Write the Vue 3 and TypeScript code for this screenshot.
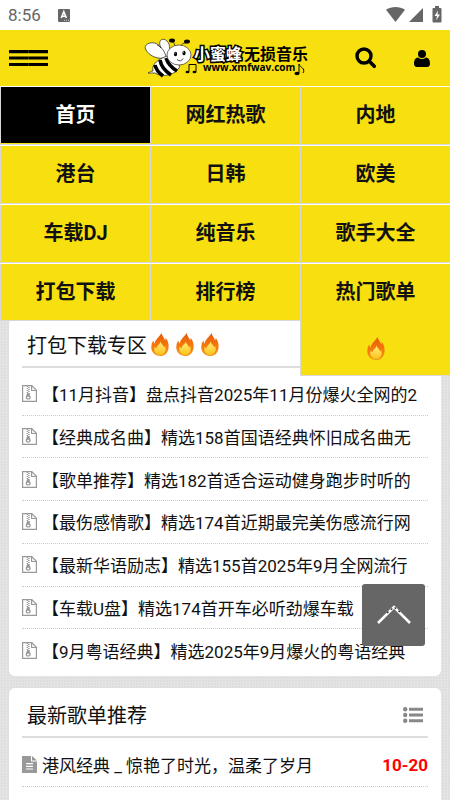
<script setup lang="ts">
interface NavItem {
  label: string
  active?: boolean
  hot?: boolean
}

const nav: NavItem[] = [
  { label: '首页', active: true },
  { label: '网红热歌' },
  { label: '内地' },
  { label: '港台' },
  { label: '日韩' },
  { label: '欧美' },
  { label: '车载DJ' },
  { label: '纯音乐' },
  { label: '歌手大全' },
  { label: '打包下载' },
  { label: '排行榜' },
  { label: '热门歌单', hot: true },
]

const packs: string[] = [
  '【11月抖音】盘点抖音2025年11月份爆火全网的2',
  '【经典成名曲】精选158首国语经典怀旧成名曲无',
  '【歌单推荐】精选182首适合运动健身跑步时听的',
  '【最伤感情歌】精选174首近期最完美伤感流行网',
  '【最新华语励志】精选155首2025年9月全网流行',
  '【车载U盘】精选174首开车必听劲爆车载',
  '【9月粤语经典】精选2025年9月爆火的粤语经典',
]

const songs: { title: string; date: string }[] = [
  { title: '港风经典 _ 惊艳了时光，温柔了岁月', date: '10-20' },
  { title: '别封伤的 _ 总有一首歌能打动你', date: '10-20' },
]

function toTop(): void {
  window.scrollTo({ top: 0, behavior: 'smooth' })
}
</script>

<template>
  <div class="page">
    <svg class="defs" aria-hidden="true">
      <defs>
        <linearGradient id="flameOuter" x1="0" y1="0" x2="0" y2="1">
          <stop offset="0" stop-color="#e8590c" />
          <stop offset="0.6" stop-color="#f57c0a" />
          <stop offset="1" stop-color="#f39a1c" />
        </linearGradient>
        <linearGradient id="flameInner" x1="0" y1="0" x2="0" y2="1">
          <stop offset="0" stop-color="#fff07a" />
          <stop offset="1" stop-color="#fcc21b" />
        </linearGradient>
        <symbol id="flame" viewBox="0 0 18 23">
          <path fill="url(#flameOuter)" d="M10.600 0c.4 3.200 2.600 4.600 3.600 7.400.5-.8.5-1.700.3-2.600 2.300 2.500 3.300 6 3.100 9.400C17.300 19.500 13.900 23 9 23S.5 19.600.3 14.600C.2 11.800 1 9.400 2.400 7.400c.1 1.500.5 2.600 1.200 3.400C4 6.500 7.800 4.300 10.600 0z" />
          <path fill="url(#flameInner)" d="M9.800 8.400c0 2.700 3.300 3.900 3.400 6.300.5-.5.8-1.200.9-2 1.700 4.600-.5 9.200-5 9.200s-7-4.200-5.300-8.400c.4 1 1 1.500 1.700 1.800.1-2.800 3.400-3.900 4.300-6.900z" />
        </symbol>
        <symbol id="zip" viewBox="0 0 15 17">
          <path fill="none" stroke="#999" stroke-width="1.200" d="M.6.6h9.200l4.600 4.700v11.100H.6zM9.600.8v4.700h4.600" />
          <path fill="none" stroke="#999" stroke-width="1.500" stroke-dasharray="1 1" d="M5.400 1v7M6.900 2v7" />
          <path fill="#999" fill-rule="evenodd" d="M5.200 8h1.900l1.600 4c.5 1.500-.8 2.600-2.500 2.600s-3-1.100-2.500-2.600zm1 3.700c-.8 0-1.300.5-1.300.9 0 .5.5.9 1.300.9s1.300-.4 1.300-.9c0-.4-.5-.9-1.300-.9z" />
        </symbol>
        <symbol id="doc" viewBox="0 0 15 17">
          <path fill="#999" fill-rule="evenodd" d="M0 0h9v5.500h6V17H0zM4 7v1.200h7V7zm0 2.700v1.200h7V9.700zm0 2.700v1.200h7v-1.200z" />
          <path fill="#999" d="M10 0l5 4.600h-5z" />
        </symbol>
      </defs>
    </svg>

    <div class="status">
      <time class="clock">8:56</time>
      <svg class="ime" viewBox="0 0 12 13"><rect width="12" height="13" rx="1" fill="#666" /><path fill="none" stroke="#fff" stroke-width="1.600" d="M3.300 9l2.500-6.300L8.400 9M4 7.200h3.700" /><path stroke="#ccc" stroke-dasharray="1 1" d="M6 11.300h5" /></svg>
      <svg class="signals" viewBox="0 0 56 18">
        <path fill="#666" d="M0 3.800C5.500.1 13.500.1 19 3.800L9.500 16z" />
        <path fill="#666" d="M23 16L37 2v14z" />
        <path fill="#666" d="M49 0h4v2h1.500q1 0 1 1v12.500q0 1-1 1h-7q-1 0-1-1V3q0-1 1-1H49z" />
        <path fill="#fff" d="M52 4.500L48.500 10H51l-.8 4.300L54 8.500h-2.500z" />
      </svg>
    </div>

    <header class="header">
      <button class="icon-btn menu" aria-label="菜单">
        <svg viewBox="0 0 39 17" width="39" height="17"><path stroke="#000" stroke-width="3.200" d="M0 1.600h39M0 8h39M0 14.500h39" /><path stroke="#f7df10" stroke-opacity=".4" stroke-width=".5" d="M19.500 0v17" /></svg>
      </button>
      <a class="logo" href="#" aria-label="小蜜蜂无损音乐">
        <svg viewBox="0 0 168 42" width="168" height="42">
          <g stroke="#333" stroke-width=".8">
            <path fill="#fff" d="M24 20C15 24 5 18 2.500 12S13 2 18 11c-4-8 2-11 6-7s3 12 1 15z" />
            <path fill="none" d="M14 8c5 2 8 7 9 12" />
            <path fill="#fff" d="M24 19c-8 3-16 8-14 15-2 0-3 1-5 2h7c7 5 22 2 25-7z" />
          </g>
          <path fill="none" stroke="#000" stroke-width="3.600" d="M17 23c1 6 5 11 11 15M12 28c1 5 4 8 8 11M23 21c2 6 6 10 11 13" />
          <path fill="none" stroke="#222" stroke-width=".8" d="M32 11c0-4-1-6-4-7M37 11c1-4 3-5 6-5" />
          <ellipse cx="29" cy="3.500" rx="3" ry="2" /><ellipse cx="44" cy="4.500" rx="3" ry="2" />
          <ellipse cx="36" cy="18" rx="12" ry="10" fill="#fff" stroke="#333" stroke-width=".7" />
          <ellipse cx="32.500" cy="17" rx="1.600" ry="2.300" /><ellipse cx="41" cy="16" rx="1.600" ry="2.300" />
          <circle cx="32" cy="16" r=".6" fill="#fff" /><circle cx="40.500" cy="15" r=".6" fill="#fff" />
          <path fill="none" stroke="#222" stroke-width=".8" d="M34 22.500q4 3 6-1" />
          <text class="brand outlined" x="51" y="23">小蜜蜂</text>
          <text class="brand" x="101" y="23">无损音乐</text>
          <text class="domain" x="60" y="34">www.xmfwav.com</text>
          <g fill="none" stroke="#000" stroke-width="1"><path d="M46 34.500v-7h7v7" /><path d="M156 36v-9c1 4 7 4 4 9" /></g>
          <ellipse cx="44.500" cy="35" rx="2" ry="1.300" /><ellipse cx="51.500" cy="35" rx="2" ry="1.300" /><ellipse cx="154" cy="36.500" rx="2.500" ry="1.700" />
        </svg>
      </a>
      <button class="icon-btn search" aria-label="搜索">
        <svg viewBox="0 0 22 22" width="22" height="22"><circle cx="9" cy="9" r="7" fill="none" stroke="#000" stroke-width="3.400" /><path stroke="#000" stroke-width="3.600" stroke-linecap="round" d="M14.300 14.300l5 5" /></svg>
      </button>
      <button class="icon-btn user" aria-label="用户">
        <svg viewBox="0 0 16 17" width="16" height="17"><circle cx="8" cy="4" r="4" /><path d="M4 7.500q4 3 8 0c3 .3 4 3.200 4 6.300 0 2-1 3.200-3 3.200H3c-2 0-3-1.200-3-3.200 0-3.100 1-6 4-6.300z" /></svg>
      </button>
      <nav class="nav">
        <a v-for="item in nav" :key="item.label" href="#" class="cell" :class="{ active: item.active }">
          <span>{{ item.label }}</span>
          <svg v-if="item.hot" class="flame"><use href="#flame" /></svg>
        </a>
      </nav>
    </header>

    <main class="content">
      <section class="card">
        <h2 class="title">
          <span>打包下载专区</span>
          <span class="flames">
            <svg v-for="n in 3" :key="n" class="flame"><use href="#flame" /></svg>
          </span>
        </h2>
        <ul class="list packs">
          <li v-for="text in packs" :key="text">
            <svg class="file"><use href="#zip" /></svg>
            <a href="#">{{ text }}</a>
          </li>
        </ul>
      </section>

      <section class="card">
        <h2 class="title">
          <span>最新歌单推荐</span>
          <a class="more" href="#" aria-label="更多">
            <svg viewBox="0 0 20 16" width="20" height="16"><g fill="#888"><circle cx="2.200" cy="2.200" r="2.200" /><circle cx="2.200" cy="8" r="2.200" /><circle cx="2.200" cy="13.800" r="2.200" /><path d="M6 .8h14v3H6zM6 6.500h14v3H6zM6 12.200h14v3H6z" /></g></svg>
          </a>
        </h2>
        <ul class="list songs">
          <li v-for="song in songs" :key="song.title">
            <svg class="file"><use href="#doc" /></svg>
            <a href="#">{{ song.title }}</a>
            <time class="date">{{ song.date }}</time>
          </li>
        </ul>
      </section>
    </main>

    <button class="to-top" aria-label="返回顶部" @click="toTop">
      <svg viewBox="0 0 34 20" width="34" height="20"><path fill="none" stroke="#fff" stroke-width="2.600" d="M1 18L17 2l16 16" /><path fill="none" stroke="#333" stroke-width="1.400" stroke-dasharray="2 3" d="M10 8l7-6 7 6" /></svg>
    </button>
  </div>
</template>

<style>
body {
  margin: 0;
}
</style>

<style scoped>
.page {
  height: 100vh;
  overflow: hidden;
  color: #111;
  font-family: Roboto, "Noto Sans CJK SC", sans-serif;
  background-color: #dedede;
  background-image:
    repeating-linear-gradient(0deg, rgba(255, 255, 255, 0.15) 0 1px, transparent 1px 3px),
    repeating-linear-gradient(90deg, rgba(255, 255, 255, 0.15) 0 1px, transparent 1px 3px);
}
.defs {
  position: absolute;
  width: 0;
  height: 0;
}
a {
  color: inherit;
  text-decoration: none;
}
.status {
  display: flex;
  align-items: center;
  height: 30px;
  padding: 0 8px;
  background: #fff;
}
.clock {
  color: #666;
  font-size: 17px;
}
.ime {
  width: 12px;
  height: 13px;
  margin-left: 17px;
}
.signals {
  width: 56px;
  height: 18px;
  margin-left: auto;
}
.header {
  position: relative;
  z-index: 1;
  display: flex;
  align-items: center;
  height: 56px;
  padding: 0 20px 0 9px;
  background: #f7df10;
}
.icon-btn {
  display: flex;
  padding: 0;
  border: 0;
  background: none;
}
.logo {
  display: flex;
  margin: 0 44px 0 auto;
}
.brand {
  font-family: "Noto Sans CJK SC", sans-serif;
  font-size: 16px;
  font-weight: 700;
}
.outlined {
  fill: #fff;
  stroke: #000;
  stroke-width: 3px;
  paint-order: stroke;
}
.domain {
  font-family: "Open Sans", sans-serif;
  font-size: 10px;
  font-weight: 700;
}
.search {
  margin-right: 37px;
}
.nav {
  position: absolute;
  top: 100%;
  left: 0;
  right: 0;
  display: grid;
  grid-template-columns: repeat(3, 1fr);
  grid-template-rows: repeat(3, 59px) 58px;
  align-items: start;
}
.cell {
  display: flex;
  flex-direction: column;
  align-items: center;
  box-sizing: border-box;
  border: solid #d8d8d8;
  border-width: 1px 0 1px 1px;
  border-top-color: #fff;
  background: #f7df10;
  color: #111;
  font-size: 20px;
  font-weight: 700;
  line-height: 56px;
}
.cell:nth-child(-n + 9) {
  border-bottom-color: #f7df10;
  box-shadow: 0 1px #d8d8d8;
}
.cell.active {
  background: #000;
  color: #fff;
}
.flame {
  width: 18px;
  height: 23px;
}
.cell .flame {
  margin: 17px 0 15px;
}
.content {
  display: flex;
  flex-direction: column;
  gap: 12px;
  padding: 232px 9px 0;
}
.card {
  padding: 0 13px;
  border-radius: 6px;
  background: #fff;
}
.title {
  display: flex;
  align-items: center;
  box-sizing: border-box;
  height: 50px;
  margin: 0;
  padding: 5px 5px 0;
  border-bottom: 2px solid #ddd;
  font-size: 20px;
  font-weight: 400;
}
.flames {
  display: flex;
  gap: 7px;
  margin-left: 4px;
}
.more {
  display: flex;
  margin-left: auto;
}
.list {
  display: grid;
  grid-auto-rows: 1fr;
  margin: 0;
  padding: 5px 0 4px;
  list-style: none;
}
.packs {
  min-height: 299px;
}
.list li {
  display: flex;
  align-items: center;
  gap: 5px;
  box-sizing: border-box;
  min-height: 42px;
  border-bottom: 1px dotted #ccc;
  font-size: 17px;
  white-space: nowrap;
}
.songs li {
  min-height: 44px;
}
.packs li:last-child {
  border-bottom: 0;
}
.file {
  flex: none;
  width: 15px;
  height: 17px;
}
.date {
  margin-left: auto;
  color: #f00;
  font-weight: 700;
}
.to-top {
  position: fixed;
  right: 25px;
  bottom: 154px;
  z-index: 2;
  display: flex;
  align-items: center;
  justify-content: center;
  width: 63px;
  height: 62px;
  padding: 0;
  border: 0;
  border-radius: 3px;
  background: #666;
}
</style>
